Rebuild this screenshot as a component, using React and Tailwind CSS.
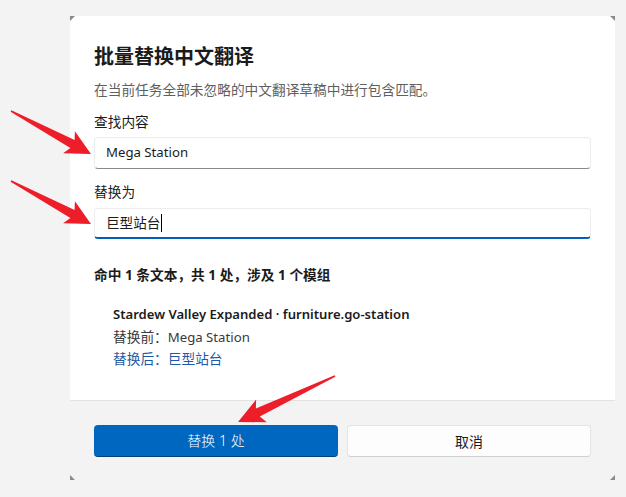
import React from "react";

function arrowPoints(tail, tip, headLen = 25, headW = 25, shaftW = 8) {
  const dx = tip[0] - tail[0];
  const dy = tip[1] - tail[1];
  const len = Math.hypot(dx, dy);
  const ux = dx / len, uy = dy / len;
  const nx = -uy, ny = ux;
  const bx = tip[0] - ux * headLen, by = tip[1] - uy * headLen;
  const sx = tip[0] - ux * (headLen - 4), sy = tip[1] - uy * (headLen - 4);
  const pts = [
    [tail[0] + nx * 0.8, tail[1] + ny * 0.8],
    [sx + nx * shaftW / 2, sy + ny * shaftW / 2],
    [bx + nx * headW / 2, by + ny * headW / 2],
    tip,
    [bx - nx * headW / 2, by - ny * headW / 2],
    [sx - nx * shaftW / 2, sy - ny * shaftW / 2],
    [tail[0] - nx * 0.8, tail[1] - ny * 0.8],
  ];
  return pts.map((p) => p[0].toFixed(1) + "," + p[1].toFixed(1)).join(" ");
}

export default function App() {
  const font = { fontFamily: '"Segoe UI", "Noto Sans", "Noto Sans CJK SC", sans-serif' };
  return (
    <div className="relative w-[626px] h-[497px] bg-[#f3f3f3] overflow-hidden" style={font}>
      <div className="pt-4 pl-[70px]">
        <div className="relative w-[545px] h-[464px] bg-white flex flex-col">
          <div className="flex-1 px-6 pt-[27px]">
            <h1 className="text-[20px] leading-[28px] font-bold text-[#1b1b1b]">批量替换中文翻译</h1>
            <p className="mt-[9px] text-[13.7px] leading-[20px] text-[#5f5f5f]">在当前任务全部未忽略的中文翻译草稿中进行包含匹配。</p>
            <div className="mt-3 text-[13.7px] leading-[20px] text-[#1b1b1b]">查找内容</div>
            <div className="mt-[5px] h-[32px] rounded-[4px] border border-[#ececec] border-b-[#8a8a8a] bg-white flex items-center pl-[11px] text-[13.2px] text-[#1b1b1b]">
              Mega Station
            </div>
            <div className="mt-[13px] text-[13.7px] leading-[20px] text-[#1b1b1b]">替换为</div>
            <div className="mt-[6px] h-[31px] rounded-[4px] border border-[#ececec] border-b-2 border-b-[#005fb8] bg-white flex items-center pl-[11px] text-[13.6px] text-[#1b1b1b]">
              <span>巨型站台</span>
              <span className="ml-[1px] w-px h-[18px] bg-black" />
            </div>
            <div className="mt-[26px] text-[13.7px] leading-[20px] font-bold text-[#1b1b1b]">命中 1 条文本，共 1 处，涉及 1 个模组</div>
            <div className="mt-[18px] pl-[19px] text-[13.7px] leading-[22.5px]">
              <div className="font-semibold text-[13.1px] text-[#1b1b1b]">Stardew Valley Expanded · furniture.go-station</div>
              <div className="text-[#3a3a3a]">替换前：<span className="text-[13.2px]">Mega Station</span></div>
              <div className="text-[#1f5aa6]">替换后：巨型站台</div>
            </div>
          </div>
          <div className="h-[80px] bg-[#f3f3f3] border-t border-[#e3e3e3] px-6 pt-[24px]">
            <div className="grid grid-cols-2 gap-[9px]">
              <button className="h-[32px] rounded-[4px] bg-[#0067c0] border-b border-[#003e73] text-white text-[14px] font-light">替换 1 处</button>
              <button className="h-[32px] rounded-[4px] bg-[#fdfdfd] border border-[#e3e3e3] border-b-[#cfcfcf] text-[#1b1b1b] text-[14px]">取消</button>
            </div>
          </div>
          <svg className="absolute left-0 top-0" width="5" height="5"><polygon points="0,0 5,0 0,5" fill="#8a8a8a" /></svg>
          <svg className="absolute right-0 top-0" width="5" height="5"><polygon points="0,0 5,0 5,5" fill="#8a8a8a" /></svg>
          <svg className="absolute left-0 bottom-0" width="5" height="5"><polygon points="0,0 0,5 5,5" fill="#8a8a8a" /></svg>
          <svg className="absolute right-0 bottom-0" width="5" height="5"><polygon points="5,0 5,5 0,5" fill="#8a8a8a" /></svg>
        </div>
      </div>
      <svg className="absolute inset-0 pointer-events-none" width="626" height="497">
        <polygon points={arrowPoints([11, 111], [91, 154], 25, 25, 9)} fill="#ee1d2a" />
        <polygon points={arrowPoints([11, 181], [91, 224], 25, 25, 9)} fill="#ee1d2a" />
        <polygon points={arrowPoints([335, 376], [238, 422], 26, 25, 9)} fill="#ee1d2a" />
      </svg>
    </div>
  );
}
